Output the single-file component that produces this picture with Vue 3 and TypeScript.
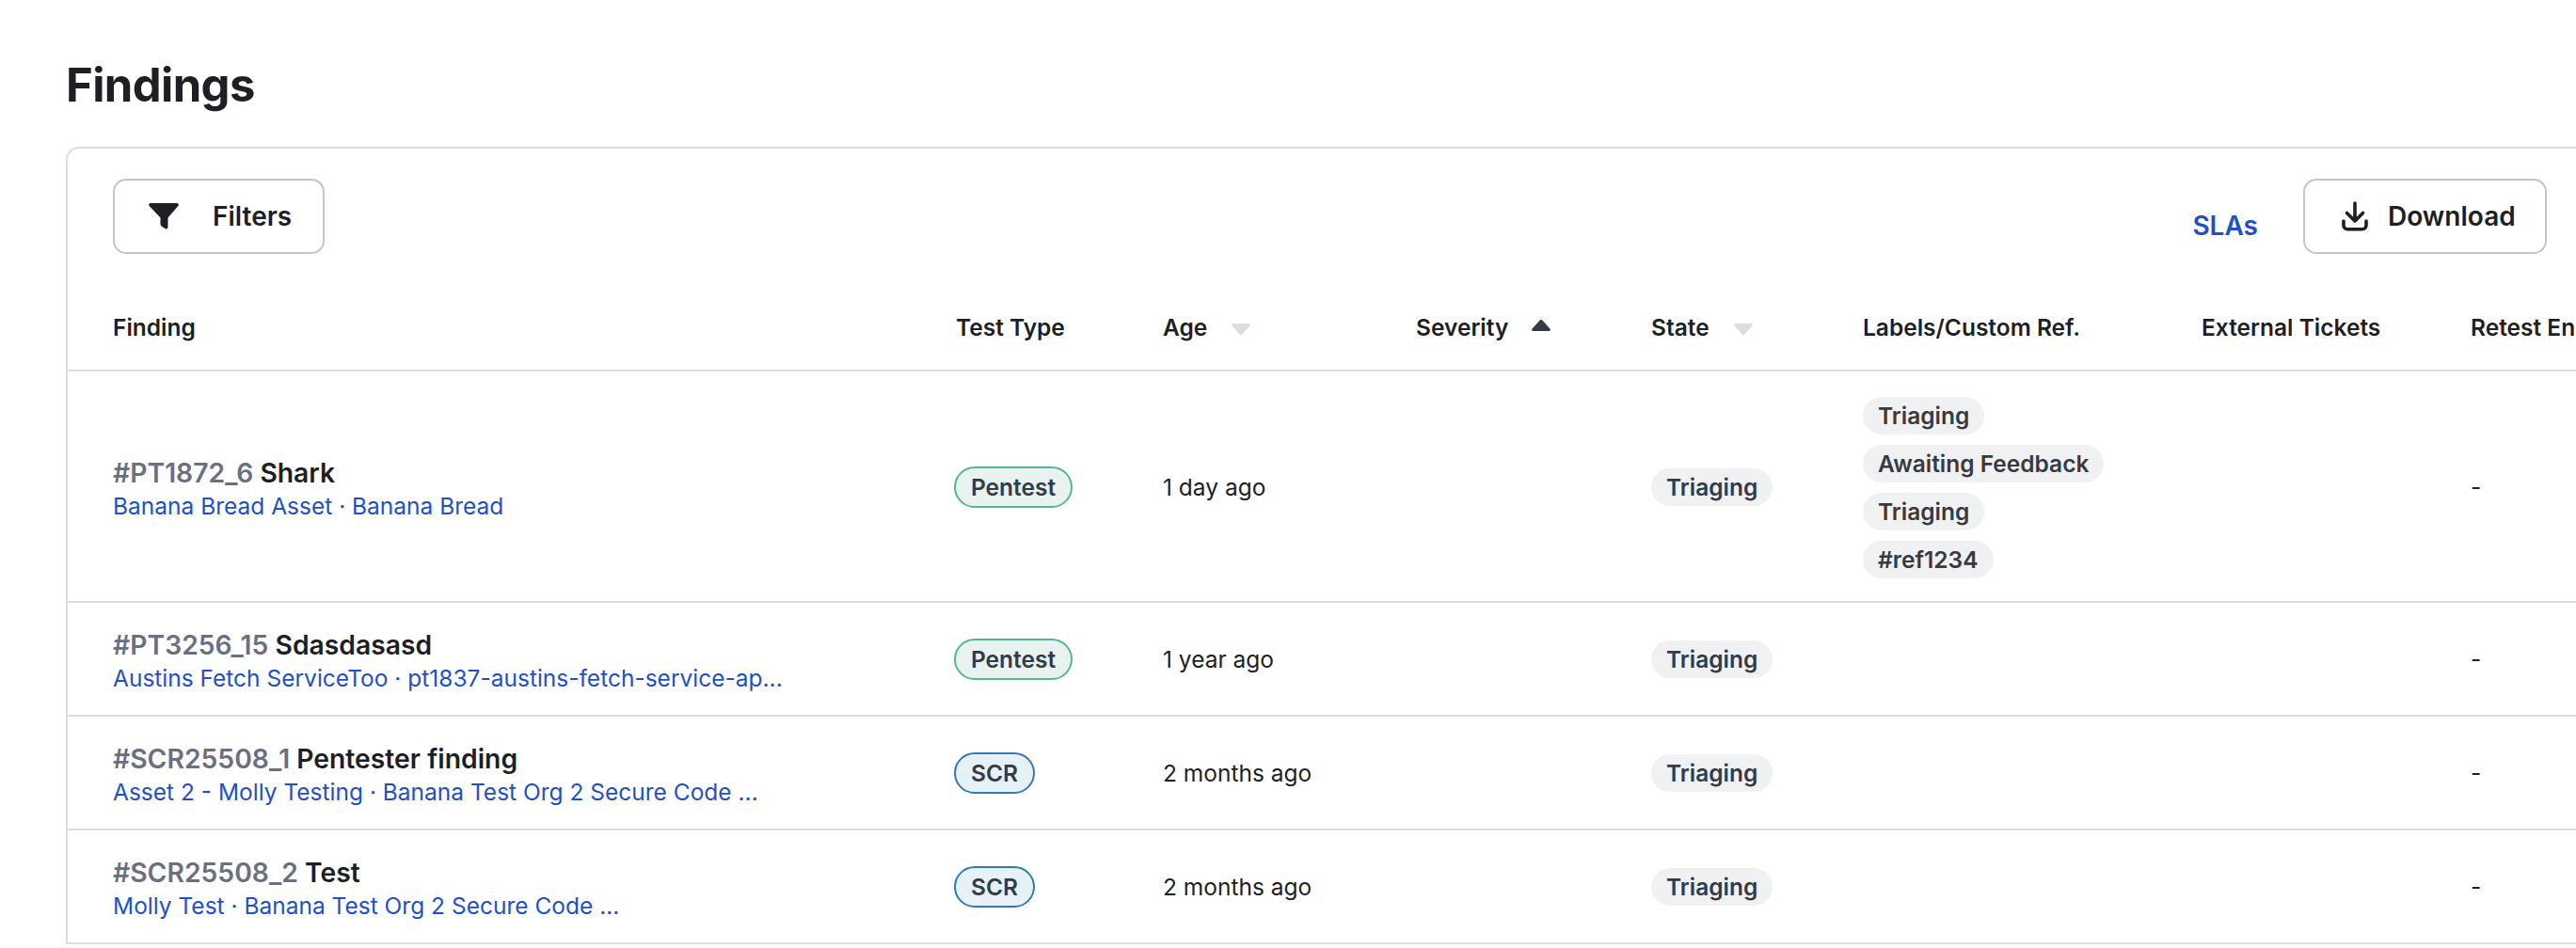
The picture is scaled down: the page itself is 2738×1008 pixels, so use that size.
<script setup lang="ts">
interface Finding {
  id: string
  name: string
  asset: string
  project: string
  type: 'Pentest' | 'SCR'
  age: string
  labels: string[]
}
const findings: Finding[] = [
  { id: '#PT1872_6', name: 'Shark', asset: 'Banana Bread Asset', project: 'Banana Bread', type: 'Pentest', age: '1 day ago', labels: ['Triaging', 'Awaiting Feedback', 'Triaging', '#ref1234'] },
  { id: '#PT3256_15', name: 'Sdasdasasd', asset: 'Austins Fetch ServiceToo', project: 'pt1837-austins-fetch-service-ap...', type: 'Pentest', age: '1 year ago', labels: [] },
  { id: '#SCR25508_1', name: 'Pentester finding', asset: 'Asset 2 - Molly Testing', project: 'Banana Test Org 2 Secure Code ...', type: 'SCR', age: '2 months ago', labels: [] },
  { id: '#SCR25508_2', name: 'Test', asset: 'Molly Test', project: 'Banana Test Org 2 Secure Code ...', type: 'SCR', age: '2 months ago', labels: [] },
]
</script>

<template>
  <main class="page">
    <h1 class="title">Findings</h1>
    <section class="card">
      <div class="toolbar">
        <button class="btn filters">
          <svg class="funnel" viewBox="0 0 32 28" width="32" height="28"><path d="M2 0h28c1.600 0 2.400 1.800 1.300 3L20.500 15.500V25c0 2.300-1.800 3-3.200 2l-3.500-2.500c-1-.7-1.300-1.500-1.300-2.500v-6.500L.7 3C-.4 1.800.4 0 2 0z" fill="#1d1f24"/></svg>
          <span>Filters</span>
        </button>
        <div class="actions">
          <a class="slas">SLAs</a>
          <button class="btn download">
            <svg viewBox="0 0 28 32" width="28" height="32" fill="none" stroke="#1d1f24" stroke-width="3.6"><path d="M14 2v18M5.500 12.500 14 21l8.500-8.500" stroke-linecap="round" stroke-linejoin="round"/><path d="M2 21v4.500c0 2.500 1.800 4.300 4.300 4.300h15.400c2.500 0 4.300-1.800 4.300-4.300V21" stroke-linecap="round"/></svg>
            <span>Download</span>
          </button>
        </div>
      </div>
      <table class="table">
        <colgroup>
          <col class="c1" /><col class="c2" /><col class="c3" /><col class="c4" /><col class="c5" /><col class="c6" /><col class="c7" /><col class="c8" />
        </colgroup>
        <thead>
          <tr>
            <th>Finding</th>
            <th>Test Type</th>
            <th>
              <span class="sort">Age<svg class="tri down" viewBox="0 0 22 14" width="22" height="14"><path d="M2.500 1h17c1.200 0 1.800 1.300 1.100 2.200l-8.500 9.500c-.6.700-1.600.7-2.200 0L1.400 3.200C.7 2.300 1.300 1 2.500 1z"/></svg></span>
            </th>
            <th>
              <span class="sort">Severity<svg class="tri up" viewBox="0 0 22 14" width="22" height="14"><path d="M2.500 13h17c1.200 0 1.800-1.300 1.100-2.200L12.100 1.300c-.6-.7-1.600-.7-2.200 0L1.400 10.800C.7 11.700 1.300 13 2.500 13z"/></svg></span>
            </th>
            <th>
              <span class="sort">State<svg class="tri down" viewBox="0 0 22 14" width="22" height="14"><path d="M2.500 1h17c1.200 0 1.800 1.300 1.100 2.200l-8.500 9.500c-.6.700-1.600.7-2.200 0L1.400 3.200C.7 2.300 1.300 1 2.500 1z"/></svg></span>
            </th>
            <th>Labels/Custom Ref.</th>
            <th>External Tickets</th>
            <th>Retest Ends</th>
          </tr>
        </thead>
        <tbody>
          <tr v-for="f in findings" :key="f.id">
            <td class="finding">
              <div class="name"><span class="id">{{ f.id }}</span> {{ f.name }}</div>
              <div class="links"><a>{{ f.asset }}</a> · <a>{{ f.project }}</a></div>
            </td>
            <td><span class="type" :class="f.type === 'SCR' ? 'scr' : 'pentest'">{{ f.type }}</span></td>
            <td>{{ f.age }}</td>
            <td></td>
            <td><span class="chip">Triaging</span></td>
            <td>
              <div v-if="f.labels.length" class="labels">
                <span v-for="(l, i) in f.labels" :key="i" class="chip">{{ l }}</span>
              </div>
            </td>
            <td></td>
            <td>-</td>
          </tr>
        </tbody>
      </table>
    </section>
  </main>
</template>

<style>
html, body { margin: 0; overflow: hidden; background: #fff; }
</style>

<style scoped>
.page {
  width: 2738px;
  height: 1008px;
  overflow: hidden;
  box-sizing: border-box;
  padding: 63px 0 0 70px;
  font-family: Inter, "Liberation Sans", sans-serif;
  color: #1d1f24;
}
.title {
  margin: 0 0 38px;
  font-size: 49px;
  line-height: 55px;
  font-weight: 700;
  letter-spacing: -0.6px;
}
.card {
  width: 2800px;
  border: 2px solid #dcdce2;
  border-right: 0;
  border-bottom: 0;
  border-radius: 14px 0 0 0;
}
.toolbar {
  display: flex;
  justify-content: space-between;
  align-items: flex-start;
  width: 2587px;
  padding: 32px 0 0 48px;
  height: 116px;
}
.btn {
  display: inline-flex;
  align-items: center;
  height: 80px;
  box-sizing: border-box;
  background: #fff;
  border: 2px solid #c2c6cd;
  border-radius: 14px;
  font: 600 28px Inter, "Liberation Sans", sans-serif;
  color: #1d1f24;
  padding: 0;
}
.filters { width: 225px; padding-left: 36px; gap: 36px; }
.download { width: 259px; padding-left: 39px; gap: 21px; }
.actions { display: flex; align-items: flex-start; gap: 48px; }
.slas { font-size: 28px; font-weight: 600; color: #1f50c8; margin-top: 33px; }
.table {
  border-collapse: collapse;
  table-layout: fixed;
  width: 2806px;
}
.c1 { width: 896px; }
.c2 { width: 220px; }
.c3 { width: 269px; }
.c4 { width: 250px; }
.c5 { width: 225px; }
.c6 { width: 360px; }
.c7 { width: 286px; }
.c8 { width: 300px; }
th {
  height: 88px;
  padding: 0 0 4px 48px;
  box-sizing: border-box;
  text-align: left;
  font-size: 24.5px;
  font-weight: 600;
  white-space: nowrap;
  border-bottom: 2px solid #dcdce2;
}
td {
  padding: 1px 0 0 48px;
  height: 121px;
  box-sizing: border-box;
  font-size: 24.5px;
  white-space: nowrap;
  border-bottom: 2px solid #dcdce2;
}
td.finding { padding-top: 6px; }
.sort { display: inline-flex; align-items: center; gap: 24px; }
.tri.down { fill: #dcdce2; margin: 4px 0 0 1px; }
.tri.up { fill: #363a42; margin-top: -3px; }
.name { font-size: 28.3px; font-weight: 600; line-height: 36px; color: #1d1f24; }
.id { color: #6b7080; }
.links { color: #1f50c8; font-size: 24.5px; line-height: 35px; }
.type {
  display: inline-block;
  height: 44px;
  line-height: 40px;
  box-sizing: border-box;
  padding: 0 16px;
  margin-left: -2px;
  border-radius: 22px;
  font-size: 24.5px;
  font-weight: 600;
  color: #363a42;
}
.pentest { background: #e8f2ef; border: 2px solid #56b594; }
.scr { background: #e6f1f8; border: 2px solid #3279b5; }
.chip {
  display: inline-block;
  height: 40px;
  line-height: 40px;
  padding: 0 16px;
  border-radius: 20px;
  background: #f0f1f3;
  font-size: 24.5px;
  font-weight: 600;
  color: #363a42;
}
.labels { display: flex; flex-direction: column; align-items: flex-start; gap: 11px; padding: 26px 0 24px; }
</style>
